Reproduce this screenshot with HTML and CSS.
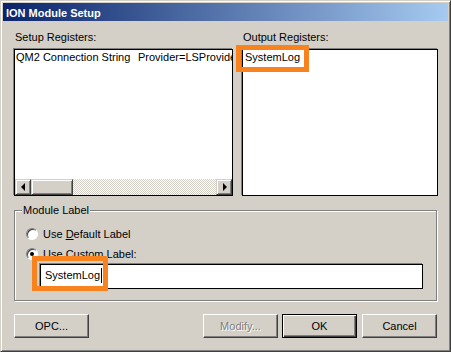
FILE: index.html
```html
<!DOCTYPE html>
<html lang="en">
<head>
    <meta charset="UTF-8">
    <title>ION Module Setup</title>
    <link rel="stylesheet" href="styles.css">
</head>
<body>
    <div class="window">
        <div class="titlebar">ION Module Setup</div>
        <div class="dialog">
            <div class="lists">
                <div class="pane pane-setup">
                    <div class="label">Setup Registers:</div>
                    <div class="listbox">
                        <div class="rows">
                            <div class="row"><span class="col-name">QM2 Connection String</span><span>Provider=LSProvide</span></div>
                        </div>
                        <div class="hscroll">
                            <span class="sb-btn"><i class="arrow arrow-left"></i></span>
                            <span class="sb-thumb"></span>
                            <span class="sb-track"></span>
                            <span class="sb-btn"><i class="arrow arrow-right"></i></span>
                        </div>
                    </div>
                </div>
                <div class="pane pane-output">
                    <div class="label">Output Registers:</div>
                    <div class="listbox">
                        <div class="rows">
                            <div class="row">SystemLog</div>
                        </div>
                        <span class="mark mark-output"></span>
                    </div>
                </div>
            </div>

            <fieldset class="group">
                <legend>Module Label</legend>
                <div class="radio-row">
                    <span class="radio"></span>
                    <span>Use <u>D</u>efault Label</span>
                </div>
                <div class="radio-row">
                    <span class="radio checked"></span>
                    <span>Use <u>C</u>ustom Label:</span>
                </div>
                <div class="textbox">
                    <span>SystemLog</span><span class="caret"></span>
                    <span class="mark mark-label"></span>
                </div>
            </fieldset>

            <div class="buttons">
                <button class="btn btn-opc">OPC...</button>
                <button class="btn btn-modify" disabled>Modify...</button>
                <button class="btn btn-ok">OK</button>
                <button class="btn">Cancel</button>
            </div>
        </div>
    </div>
</body>
</html>
```

FILE: styles.css
```css
body {
    margin: 0;
    font-family: 'Liberation Sans', Arial, sans-serif;
    font-size: 11px;
    line-height: 13px;
    color: #000;
    background: #d4d0c8;
}
.window {
    box-sizing: border-box;
    width: 451px;
    height: 352px;
    background: #d4d0c8;
    border: 1px solid;
    border-color: #d4d0c8 #404040 #404040 #d4d0c8;
    box-shadow: inset 1px 1px #fff, inset -1px -1px #808080;
    padding: 2px;
}
.titlebar {
    height: 18px;
    line-height: 18px;
    padding: 1px 0 0 3px;
    box-sizing: border-box;
    color: #fff;
    font-weight: bold;
    background: linear-gradient(90deg, #0a246a, #a6caf0);
}
.dialog {
    padding: 10px 10px 0 11px;
}
.lists {
    display: flex;
    gap: 9px;
}
.pane-setup { width: 219px; }
.pane-output { width: 196px; }
.label {
    height: 13px;
    margin-bottom: 5px;
    padding-left: 1px;
}
.listbox {
    position: relative;
    box-sizing: border-box;
    height: 147px;
    background: #fff;
    border: 1px solid #000;
    box-shadow: -1px -1px 0 #808080;
    display: flex;
    flex-direction: column;
}
.rows {
    flex: 1;
    overflow: hidden;
    padding: 1px 0 0 1px;
}
.pane-output .rows {
    padding-left: 2px;
}
.row {
    white-space: nowrap;
    overflow: hidden;
}
.col-name {
    display: inline-block;
    width: 122px;
}
.hscroll {
    display: flex;
    height: 16px;
}
.sb-btn, .sb-thumb {
    box-sizing: border-box;
    height: 16px;
    background: #d4d0c8;
    border: 1px solid;
    border-color: #d4d0c8 #404040 #404040 #d4d0c8;
    box-shadow: inset 1px 1px #fff, inset -1px -1px #808080;
}
.sb-btn {
    width: 16px;
    display: flex;
    align-items: center;
    justify-content: center;
}
.sb-thumb {
    width: 42px;
}
.sb-track {
    flex: 1;
    background: repeating-conic-gradient(#fff 0 25%, #d4d0c8 0 50%) 0 0 / 2px 2px;
}
.arrow {
    width: 0;
    height: 0;
    border-top: 4px solid transparent;
    border-bottom: 4px solid transparent;
}
.arrow-left { border-right: 4px solid #000; margin-right: 1px; }
.arrow-right { border-left: 4px solid #000; margin-left: 1px; }

.mark {
    position: absolute;
    box-sizing: border-box;
    border: 5px solid #f7821e;
}
.mark-output {
    left: -7px;
    top: -5px;
    width: 73px;
    height: 27px;
}
.mark-label {
    left: -9px;
    top: -9px;
    width: 76px;
    height: 35px;
}

.group {
    box-sizing: border-box;
    width: 423px;
    height: 97px;
    margin: 8px 0 0;
    padding: 7px 0 0 11px;
    border: 1px solid #808080;
    box-shadow: 1px 1px 0 #fff, inset 1px 1px 0 #fff;
}
.group legend {
    padding: 0 1px;
    margin-left: -4px;
    background: #d4d0c8;
}
.radio-row {
    display: flex;
    align-items: center;
    gap: 5px;
    height: 20px;
}
.radio {
    box-sizing: border-box;
    width: 12px;
    height: 12px;
    border-radius: 50%;
    background: #fff;
    border: 1px solid;
    border-color: #808080 #fff #fff #808080;
    box-shadow: inset 1px 1px #404040;
    display: flex;
    align-items: center;
    justify-content: center;
}
.radio.checked::after {
    content: "";
    width: 4px;
    height: 4px;
    border-radius: 50%;
    background: #000;
}
.textbox {
    position: relative;
    box-sizing: border-box;
    width: 383px;
    height: 25px;
    margin: 0 0 0 14px;
    padding: 4px 0 0 4px;
    background: #fff;
    border: 1px solid #000;
    box-shadow: -1px -1px 0 #808080;
    display: flex;
    align-items: flex-start;
}
.caret {
    width: 1px;
    height: 15px;
    margin: -1px 0 0 1px;
    background: #000;
}

.buttons {
    display: flex;
    width: 423px;
    margin-top: 13px;
}
.btn {
    box-sizing: border-box;
    width: 75px;
    height: 24px;
    padding: 0;
    font: inherit;
    color: #000;
    background: #d4d0c8;
    border: 1px solid;
    border-color: #fff #404040 #404040 #fff;
    box-shadow: inset -1px -1px #808080;
}
.btn-opc { margin-right: auto; }
.btn-modify {
    margin-right: 4px;
    color: #808080;
    text-shadow: 1px 1px #fff;
}
.btn-ok {
    margin-right: 5px;
    border-color: #000;
    box-shadow: inset 1px 1px #fff, inset -1px -1px #404040, inset -2px -2px #808080;
}
```
